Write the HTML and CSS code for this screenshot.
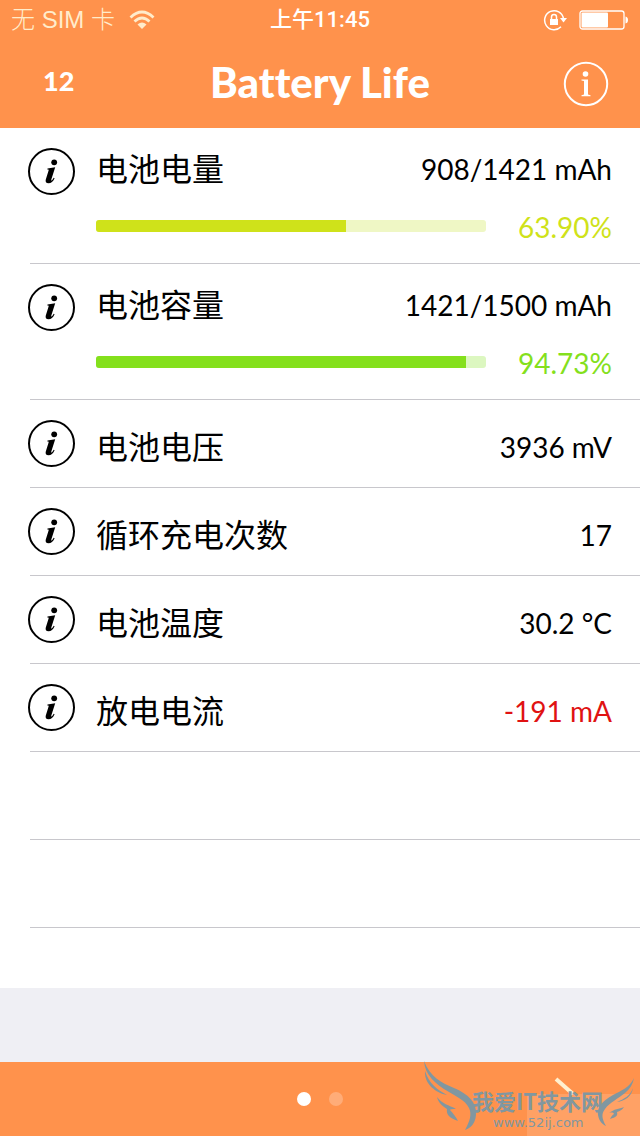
FILE: index.html
```html
<!DOCTYPE html>
<html lang="zh-CN">
<head>
<meta charset="utf-8">
<meta name="viewport" content="width=device-width, initial-scale=1">
<title>Battery Life</title>
<link rel="stylesheet" href="styles.css">
</head>
<body>
<svg class="defs" width="0" height="0" aria-hidden="true">
  <symbol id="info" viewBox="0 0 48 48">
    <circle cx="23.500" cy="24.500" r="22.5" fill="none" stroke="currentColor" stroke-width="2"/>
    <circle cx="26.200" cy="15.300" r="2.900" fill="currentColor"/>
    <path d="M19.5 21.500 L27.200 20.300 L23.300 32.600 C23 33.7 23.400 33.9 24 33.2 C24.8 32.5 25.2 31.6 25.700 30.7 L26.600 31.2 C25.2 34.500 23 36.200 20.6 36.200 C18 36.200 17.2 34.600 17.800 32.4 L20.600 23.6 C20.900 22.600 20.500 22.400 19.3 22.500 Z" fill="currentColor"/>
  </symbol>
</svg>
<div class="app">
  <header class="top">
    <div class="status">
      <div class="carrier">
        <span>无 SIM 卡</span>
        <svg width="26" height="20" viewBox="0 0 26 20" aria-hidden="true">
          <path d="M1.5 7.5 Q13 -3.5 24.500 7.500" fill="none" stroke="currentColor" stroke-width="2.800"/>
          <path d="M5.500 11.500 Q13 4.500 20.500 11.500" fill="none" stroke="currentColor" stroke-width="2.800"/>
          <path d="M8.500 14.500 Q13 10.500 17.500 14.500 L13 19 Z" fill="currentColor"/>
        </svg>
      </div>
      <div class="clock">上午11:45</div>
      <div class="power">
        <svg width="24" height="22" viewBox="0 0 24 22" aria-hidden="true">
          <path d="M20.500 9.500 A9.500 9.500 0 1 0 18 17.800" fill="none" stroke="currentColor" stroke-width="1.500"/>
          <path d="M17 9 H24 L20.500 13.500 Z" fill="currentColor"/>
          <rect x="7" y="10" width="8" height="6" fill="currentColor"/>
          <path d="M8.500 10.500 V8 a2.500 2.500 0 0 1 5 0 V10.500" fill="none" stroke="currentColor" stroke-width="1.500"/>
        </svg>
        <svg width="50" height="20" viewBox="0 0 50 20" aria-hidden="true">
          <rect x="1" y="1" width="44" height="18" rx="2.500" fill="none" stroke="currentColor" stroke-width="1.300"/>
          <rect x="2.500" y="2.500" width="26.500" height="15" rx="1" fill="currentColor"/>
          <path d="M46.500 6.500 Q49 7 49 10 Q49 13 46.500 13.500 Z" fill="currentColor"/>
        </svg>
      </div>
    </div>
    <nav class="nav">
      <button class="count" type="button">12</button>
      <h1 class="title">Battery Life</h1>
      <button class="about" type="button" aria-label="Info">
        <svg width="46" height="46" viewBox="0 0 46 46" aria-hidden="true">
          <circle cx="23" cy="23" r="21.200" fill="none" stroke="currentColor" stroke-width="2"/>
          <circle cx="22.500" cy="13" r="2.800" fill="currentColor"/>
          <path d="M18.500 18.500 H25 V33.500 L27.500 34.300 V35.200 H18.500 V34.300 L21 33.500 V20 L18.500 19.400 Z" fill="currentColor"/>
        </svg>
      </button>
    </nav>
  </header>

  <main class="main">
    <ul class="list">
      <li class="row">
        <button class="info" type="button" aria-label="电池电量"><svg width="48" height="48" aria-hidden="true"><use href="#info"/></svg></button>
        <div class="body">
          <div class="line"><label class="label" for="charge">电池电量</label><span class="value">908/1421 mAh</span></div>
          <div class="line meter yellow"><progress class="bar" id="charge" max="100" value="64.2"></progress><span class="percent">63.90%</span></div>
        </div>
      </li>
      <li class="row">
        <button class="info" type="button" aria-label="电池容量"><svg width="48" height="48" aria-hidden="true"><use href="#info"/></svg></button>
        <div class="body">
          <div class="line"><label class="label" for="capacity">电池容量</label><span class="value">1421/1500 mAh</span></div>
          <div class="line meter green"><progress class="bar" id="capacity" max="100" value="95"></progress><span class="percent">94.73%</span></div>
        </div>
      </li>
      <li class="row short">
        <button class="info" type="button" aria-label="电池电压"><svg width="48" height="48" aria-hidden="true"><use href="#info"/></svg></button>
        <div class="body"><div class="line"><span class="label">电池电压</span><span class="value">3936 mV</span></div></div>
      </li>
      <li class="row short">
        <button class="info" type="button" aria-label="循环充电次数"><svg width="48" height="48" aria-hidden="true"><use href="#info"/></svg></button>
        <div class="body"><div class="line"><span class="label">循环充电次数</span><span class="value">17</span></div></div>
      </li>
      <li class="row short">
        <button class="info" type="button" aria-label="电池温度"><svg width="48" height="48" aria-hidden="true"><use href="#info"/></svg></button>
        <div class="body"><div class="line"><span class="label">电池温度</span><span class="value">30.2 °C</span></div></div>
      </li>
      <li class="row short">
        <button class="info" type="button" aria-label="放电电流"><svg width="48" height="48" aria-hidden="true"><use href="#info"/></svg></button>
        <div class="body"><div class="line"><span class="label">放电电流</span><span class="value alert">-191 mA</span></div></div>
      </li>
      <li class="row short"></li>
      <li class="row short"></li>
      <li class="tail"></li>
    </ul>
  </main>

  <footer class="bottom">
    <div class="dots"><span class="dot on"></span><span class="dot"></span></div>
    <button class="next" type="button" aria-label="Next">
      <svg width="24" height="20" viewBox="0 0 24 20" aria-hidden="true"><path d="M2 2 L19 17" stroke="currentColor" stroke-width="4" fill="none"/></svg>
    </button>
    <svg class="stamp" width="220" height="76" viewBox="420 1060 220 76" role="img" aria-label="我爱IT技术网">
      <rect x="527" y="1094" width="113" height="42" fill="#fff" opacity="0.14"/>
      <g class="ink">
        <path d="M424 1061 C430 1077 442 1083 454 1088 C468 1094 477 1102 476 1115 C475 1125 470 1128 465 1130 C470 1121 472 1114 469 1108 C465 1100 457 1097 449 1092 C435 1084 425 1075 424 1061 Z"/>
        <path d="M425 1071 C429 1084 438 1090 447 1095 C436 1093 424 1084 425 1071 Z"/>
        <path d="M437 1097 C442 1104 449 1105 456 1109 C452 1109 450 1109 450 1110 C453 1113 456 1117 458 1121 C449 1118 446 1114 447 1109 C442 1106 438 1102 437 1097 Z"/>
        <path d="M634 1078 C629 1088 622 1090 613 1095 C601 1102 597 1108 598 1115 C599 1121 602 1124 606 1126 C602 1119 601 1114 605 1109 C610 1102 618 1099 625 1093 C630 1089 633 1084 634 1078 Z"/>
        <path d="M633 1088 C630 1096 624 1099 617 1102 C625 1101 632 1096 633 1088 Z"/>
        <path d="M624 1107 C619 1109 614 1109 609 1113 C612 1112 614 1113 614 1114 C612 1115 611 1117 610 1119 C616 1117 618 1116 617 1112 C620 1111 622 1110 624 1107 Z"/>
        <text class="mark" x="472" y="1110">我爱IT技术网</text>
        <text class="site" x="493" y="1127">www.52ij.com</text>
      </g>
    </svg>
  </footer>
</div>
</body>
</html>
```
FILE: styles.css
```css
* { box-sizing: border-box; }

body {
  margin: 0;
  background: #efeff4;
  color: #000;
  font-family: Lato, "Noto Sans CJK SC", sans-serif;
}

button {
  margin: 0;
  padding: 0;
  border: 0;
  background: none;
  color: inherit;
  font: inherit;
}

svg { display: block; }
.defs { position: absolute; }

.app {
  display: flex;
  flex-direction: column;
  min-height: 100vh;
}

.top {
  background: #ff924c;
  color: #fff;
}

.status {
  display: grid;
  grid-template-columns: 1fr auto 1fr;
  align-items: center;
  height: 40px;
  padding: 0 11px;
  font-family: Roboto, "Noto Sans CJK SC", sans-serif;
  font-size: 22px;
  line-height: 40px;
}

.carrier {
  display: flex;
  align-items: center;
  gap: 14px;
  color: #ffeccb;
  font-family: "Liberation Sans", "Noto Sans CJK SC", sans-serif;
  font-size: 24px;
  font-weight: 300;
}

.clock { font-weight: 500; }

.power {
  display: flex;
  align-items: center;
  justify-content: flex-end;
  gap: 12px;
}

.nav {
  display: grid;
  grid-template-columns: 1fr auto 1fr;
  align-items: center;
  height: 88px;
  padding: 0 31px;
}

.count {
  justify-self: start;
  padding: 0 12px 8px;
  font-size: 27px;
  font-weight: 900;
}

.title {
  margin: 0;
  padding-bottom: 4px;
  font-size: 42px;
  font-weight: 900;
  font-variant-ligatures: none;
  line-height: 80px;
}

.about { justify-self: end; }

.main { flex: 1; }

.list {
  margin: 0;
  padding: 0;
  list-style: none;
  background: #fff;
}

.row {
  display: flex;
  gap: 20px;
  min-height: 136px;
  padding: 19px 28px 0;
  background: linear-gradient(#c8c7cc, #c8c7cc) 30px 100% / 100% 1px no-repeat;
}

.short { min-height: 88px; }
.tail { height: 60px; }

.info { align-self: flex-start; }

.body { flex: 1; }

.line {
  display: flex;
  align-items: center;
  justify-content: space-between;
  height: 44px;
}

.short .line { height: 56px; }

.label {
  padding-bottom: 4px;
  font-family: "Noto Sans CJK SC", sans-serif;
  font-size: 32px;
  line-height: 40px;
}

.value,
.percent {
  font-size: 28px;
  line-height: 44px;
}

.alert { color: #e01212; }

.meter {
  gap: 32px;
  margin-top: 14px;
}

.yellow { color: #cfe21a; }
.green { color: #84e01c; }

.bar {
  flex: 1;
  height: 12px;
  margin-bottom: 2px;
  border: 0;
  border-radius: 3px;
  overflow: hidden;
  appearance: none;
}

.bar::-webkit-progress-bar { background: #eff7c5; }
.bar::-webkit-progress-value { background: #cfe21a; }
.green .bar::-webkit-progress-bar { background: #dcf7c0; }
.green .bar::-webkit-progress-value { background: #84e01c; }

.bottom {
  position: relative;
  display: grid;
  grid-template-columns: 1fr auto 1fr;
  height: 74px;
  background: #ff924c;
  color: #fff0d0;
}

.dots {
  display: flex;
  grid-column: 2;
  align-items: center;
  gap: 18px;
}

.dot {
  width: 14px;
  height: 14px;
  border-radius: 50%;
  background: #ffac78;
}

.on { background: #fff; }

.next {
  align-self: start;
  justify-self: end;
  padding: 15px 62px 0 0;
}

.stamp {
  position: absolute;
  right: 0;
  bottom: 0;
  pointer-events: none;
}

.ink { fill: #8197a0; }

.mark {
  font-family: "Noto Sans CJK SC", sans-serif;
  font-size: 22px;
  font-weight: 700;
}

.site {
  font-family: "DejaVu Sans", sans-serif;
  font-size: 13px;
}
```
